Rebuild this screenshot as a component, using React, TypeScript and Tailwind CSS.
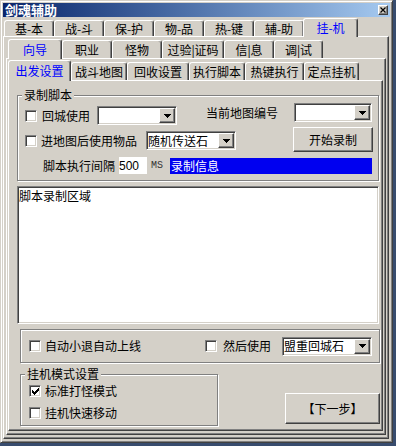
import React from 'react';

const raised =
  'border border-t-white border-l-white border-r-[#404040] border-b-[#404040] shadow-[inset_-1px_-1px_0_#808080]';
const sunken =
  'border border-t-[#808080] border-l-[#808080] border-r-white border-b-white shadow-[inset_1px_1px_0_#404040,inset_-1px_-1px_0_#d4d0c8]';
const panel =
  'flex flex-col flex-1 min-h-0 border border-t-white border-l-white border-r-[#404040] border-b-[#404040] shadow-[inset_-1px_-1px_0_#808080]';
const etched = 'relative border border-[#808080] shadow-[1px_1px_0_#fff,inset_1px_1px_0_#fff]';

type TabProps = { label: string; w: string; h: string; active?: boolean };

const Tab: React.FC<TabProps> = ({ label, w, h, active }) => (
  <div
    className={
      active
        ? `relative z-10 -mb-[1px] ${w} ${h} bg-[#d4d0c8] text-[#0000ff] flex items-center justify-center border-t border-l border-r border-t-white border-l-white border-r-[#404040] rounded-t-[3px] shadow-[inset_-1px_0_0_#808080]`
        : `${w} ${h} flex items-center justify-center border-t border-l border-r border-t-white border-l-white border-r-[#404040] rounded-t-[3px] shadow-[inset_-1px_0_0_#808080]`
    }
  >
    {label}
  </div>
);

const Check: React.FC<{ checked?: boolean }> = ({ checked }) => (
  <span className={`w-[12px] h-[12px] shrink-0 bg-white flex items-center justify-center ${sunken}`}>
    {checked && (
      <svg width="7" height="7" viewBox="0 0 7 7" shapeRendering="crispEdges">
        <path d="M0 2h1v1h1v1h1v-1h1v-1h1v-1h1v-1h1v3h-1v1h-1v1h-1v1h-1v1h-1v-1h-1v-1h-1v-1h-1z" fill="#000" />
      </svg>
    )}
  </span>
);

const Combo: React.FC<{ w: string; text?: string }> = ({ w, text }) => (
  <div className={`${w} h-[19px] shrink-0 bg-white flex items-center ${sunken}`}>
    <span className="flex-1 pl-[1px] leading-[14px] whitespace-nowrap">{text}</span>
    <span className={`w-[16px] h-[15px] shrink-0 mr-[1px] bg-[#d4d0c8] flex items-center justify-center ${raised}`}>
      <svg width="7" height="4" viewBox="0 0 7 4" shapeRendering="crispEdges">
        <path d="M0 0h7l-3.5 4z" fill="#000" />
      </svg>
    </span>
  </div>
);

export default function App() {
  return (
    <div className="w-[396px] h-[446px] bg-[#384c6e] font-['Noto_Sans_CJK_SC',sans-serif] text-[12px] leading-[14px] text-black">
      <div className="w-[393px] h-[443px] bg-[#d4d0c8] flex flex-col p-[2px] border border-t-[#d4d0c8] border-l-[#d4d0c8] border-r-[#404040] border-b-[#404040] shadow-[inset_1px_1px_0_#fff,inset_-1px_-1px_0_#808080]">
        {/* title bar */}
        <div className="h-[14px] shrink-0 flex items-center justify-between bg-gradient-to-r from-[#0a246a] to-[#a6caf0] pl-[2px] pr-[2px]">
          <span className="text-white font-bold text-[13px] leading-[14px]">剑魂辅助</span>
          <span className={`w-[10px] h-[10px] bg-[#d4d0c8] flex items-center justify-center ${raised}`}>
            <svg width="6" height="6" viewBox="0 0 6 6">
              <path d="M0.5 0.5l5 5M5.5 0.5l-5 5" stroke="#000" strokeWidth="1.2" />
            </svg>
          </span>
        </div>

        {/* tab row 1 */}
        <div className="h-[19px] shrink-0 flex items-end pl-[1px]">
          <Tab label="基-本" w="w-[50px]" h="h-[16px]" />
          <Tab label="战-斗" w="w-[50px]" h="h-[16px]" />
          <Tab label="保-护" w="w-[50px]" h="h-[16px]" />
          <Tab label="物-品" w="w-[50px]" h="h-[16px]" />
          <Tab label="热-键" w="w-[50px]" h="h-[16px]" />
          <Tab label="辅-助" w="w-[50px]" h="h-[16px]" />
          <div className="-ml-[1px] flex items-end">
            <Tab label="挂-机" w="w-[55px]" h="h-[19px]" active />
          </div>
        </div>

        <div className={`${panel} mr-[1px] mb-[1px] px-[2px] pb-[3px]`}>
          {/* tab row 2 */}
          <div className="h-[21px] shrink-0 flex items-end pl-[2px]">
            <Tab label="向导" w="w-[54px]" h="h-[20px]" active />
            <Tab label="职业" w="w-[50px]" h="h-[18px]" />
            <Tab label="怪物" w="w-[50px]" h="h-[18px]" />
            <Tab label="过验|证码" w="w-[62px]" h="h-[18px]" />
            <Tab label="信|息" w="w-[50px]" h="h-[18px]" />
            <Tab label="调|试" w="w-[49px]" h="h-[18px]" />
          </div>

          <div className={`${panel} pl-[1px] pr-[2px] pb-[3px]`}>
            {/* tab row 3 */}
            <div className="h-[21px] shrink-0 flex items-end">
              <Tab label="出发设置" w="w-[63px]" h="h-[21px]" active />
              <Tab label="战斗地图" w="w-[56px]" h="h-[18px]" />
              <Tab label="回收设置" w="w-[62px]" h="h-[18px]" />
              <Tab label="执行脚本" w="w-[56px]" h="h-[18px]" />
              <Tab label="热键执行" w="w-[59px]" h="h-[18px]" />
              <Tab label="定点挂机" w="w-[55px]" h="h-[18px]" />
            </div>

            <div className={`${panel} pl-[8px] pr-[2px]`}>
              {/* 录制脚本 */}
              <div className={`${etched} mt-[14px] mr-[1px] h-[86px] shrink-0 flex flex-col`}>
                <span className="absolute left-[4px] top-[-7px] px-[2px] bg-[#d4d0c8] leading-[12px]">录制脚本</span>
                <div className="h-[29px] flex items-start">
                  <div className="mt-[10px] pl-[7px] flex items-center">
                    <Check />
                    <span className="ml-[5px] w-[48px]">回城使用</span>
                    <span className="ml-[7px]">
                      <Combo w="w-[80px]" />
                    </span>
                  </div>
                  <div className="ml-auto mt-[7px] pr-[6px] flex items-center">
                    <span>当前地图编号</span>
                    <span className="ml-[16px]">
                      <Combo w="w-[78px]" />
                    </span>
                  </div>
                </div>
                <div className="h-[27px] flex items-start">
                  <div className="mt-[6px] pl-[7px] flex items-center">
                    <Check />
                    <span className="ml-[4px] w-[96px]">进地图后使用物品</span>
                    <span className="ml-[9px]">
                      <Combo w="w-[90px]" text="随机传送石" />
                    </span>
                  </div>
                  <div className="ml-auto mt-[2px] pr-[5px]">
                    <div className={`w-[80px] h-[25px] flex items-center justify-center ${raised}`}>开始录制</div>
                  </div>
                </div>
                <div className="mt-[5px] h-[17px] flex items-center pl-[25px] pr-[6px]">
                  <span className="w-[72px]">脚本执行间隔</span>
                  <span className="ml-[4px] w-[28px] h-[17px] bg-white flex items-center font-['Liberation_Sans',sans-serif] text-[12px]">500</span>
                  <span className="ml-[4px] font-['Liberation_Mono',monospace] text-[10px] text-[#333]">MS</span>
                  <span className="ml-[7px] flex-1 h-[16px] bg-[#0000f0] text-white flex items-center pl-[1px]">录制信息</span>
                </div>
              </div>

              {/* 脚本录制区域 */}
              <div className={`mt-[5px] mr-[1px] h-[138px] shrink-0 bg-white pl-[1px] pt-[2px] ${sunken}`}>脚本录制区域</div>

              {/* auto relog */}
              <div className={`${etched} mt-[5px] ml-[3px] h-[34px] shrink-0 flex items-center pl-[8px] pr-[7px]`}>
                <Check />
                <span className="ml-[4px]">自动小退自动上线</span>
                <div className="ml-auto flex items-center">
                  <Check />
                  <span className="ml-[6px] w-[48px]">然后使用</span>
                  <span className="ml-[11px]">
                    <Combo w="w-[90px]" text="盟重回城石" />
                  </span>
                </div>
              </div>

              {/* bottom */}
              <div className="flex items-start">
                <div className={`${etched} mt-[11px] ml-[3px] w-[198px] h-[52px] shrink-0 flex flex-col gap-[6px] pl-[8px] pt-[8px]`}>
                  <span className="absolute left-[4px] top-[-7px] px-[2px] bg-[#d4d0c8] leading-[12px]">挂机模式设置</span>
                  <div className="h-[16px] flex items-center">
                    <Check checked />
                    <span className="ml-[4px]">标准打怪模式</span>
                  </div>
                  <div className="h-[16px] flex items-center">
                    <Check />
                    <span className="ml-[4px]">挂机快速移动</span>
                  </div>
                </div>
                <div className={`ml-auto mt-[30px] w-[95px] h-[31px] flex items-center justify-center ${raised}`}>【下一步】</div>
              </div>
            </div>
          </div>
        </div>
      </div>
    </div>
  );
}
